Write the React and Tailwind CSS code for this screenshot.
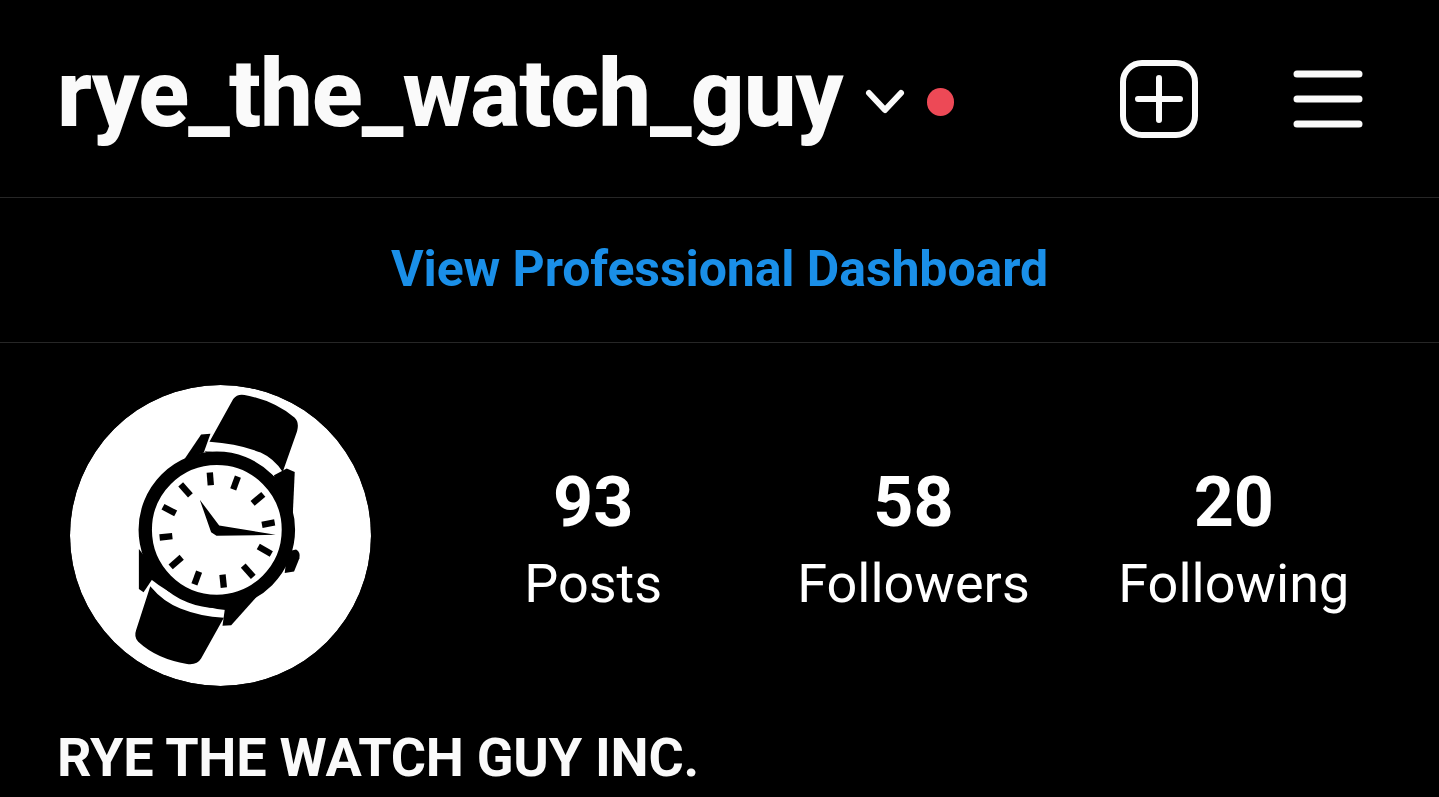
import React from "react";

const font = { fontFamily: "Roboto, sans-serif" };
const ticks = [
  [448, 292, 451, 330], [532, 304, 518, 342], [608, 357, 576, 384], [642, 441, 604, 448],
  [632, 535, 593, 513], [578, 604, 548, 570], [490, 636, 486, 597], [402, 626, 416, 588],
  [331, 574, 364, 545], [298, 486, 336, 482], [308, 394, 346, 414], [361, 327, 390, 360],
];

function Watch() {
  return (
    <svg viewBox="30 30 900 900" className="w-full h-full block">
      <circle cx="480" cy="480" r="450" fill="#fff" />
      <path fill="#000" d="M447 200 L518 72 Q530 56 552 60 Q640 76 702 128 Q716 142 709 168 L666 290 Q640 250 600 232 Q530 205 447 200 Z" />
      <path fill="#000" d="M270 632 Q310 680 360 698 Q420 722 490 726 L422 848 Q410 868 380 864 Q290 850 234 798 Q220 784 228 762 Z" />
      <path fill="#000" d="M372 252 L422 178 L450 176 L430 232 Z" />
      <path fill="#000" d="M640 300 L678 280 L702 290 L696 420 L660 420 Z" />
      <path fill="#000" d="M236 520 L236 640 L250 650 L290 590 Z" />
      <path fill="#000" d="M486 750 L512 748 L600 650 L500 650 Z" />
      <path fill="#000" d="M680 528 L706 522 Q720 530 716 548 L700 588 L672 592 Z" />
      <path fill="#000" d="M432 228 Q560 232 662 322 L660 400 L500 280 Z" />
      <path fill="#000" d="M268 608 Q370 690 495 703 L500 640 L300 560 Z" />
      <circle cx="469" cy="463" r="214" fill="#fff" stroke="#000" strokeWidth="40" />
      {ticks.map(([x1, y1, x2, y2], i) => (
        <line key={i} x1={x1} y1={y1} x2={x2} y2={y2} stroke="#000" strokeWidth="19" />
      ))}
      <path fill="#000" d="M418 373 L476 450 L645 478 L468 481 L452 470 Z" />
    </svg>
  );
}

function Stat({ value, label }) {
  return (
    <div className="flex flex-col items-center">
      <div className="text-[70px] leading-[76px] font-bold text-white">{value}</div>
      <div className="text-[54px] leading-[64px] text-white mt-[12px]">{label}</div>
    </div>
  );
}

export default function App() {
  return (
    <div className="w-[1439px] h-[797px] bg-black overflow-hidden" style={font}>
      <div className="h-[198px] border-b border-[#262626] flex items-center pl-[57px] pr-[76px]">
        <span className="text-[94px] font-extrabold text-[#fafafa] leading-none tracking-[-1px] -mt-[10px]">rye_the_watch_guy</span>
        <svg viewBox="0 0 40 26" className="w-[40px] h-[26px] ml-[22px] mt-[6px]" fill="none" stroke="#fafafa" strokeWidth="6" strokeLinecap="round" strokeLinejoin="round">
          <path d="M4 4 L20 21 L36 4" />
        </svg>
        <span className="w-[27px] h-[28px] rounded-full bg-[#ed4956] ml-[22px] mt-[6px]" />
        <svg viewBox="0 0 78 78" className="w-[78px] h-[78px] ml-auto" fill="none" stroke="#fafafa" strokeWidth="6" strokeLinecap="round">
          <rect x="3" y="3" width="72" height="72" rx="19" />
          <path d="M39 18 V60 M18 39 H60" />
        </svg>
        <svg viewBox="0 0 70 58" className="w-[70px] h-[58px] ml-[95px]" fill="none" stroke="#fafafa" strokeWidth="7" strokeLinecap="round">
          <path d="M4 4 H66 M4 29 H66 M4 54 H66" />
        </svg>
      </div>
      <div className="h-[145px] border-b border-[#262626] flex items-center justify-center">
        <span className="text-[50px] font-bold text-[#1a8fe8] tracking-[-0.1px] leading-none -mt-[3px]">View Professional Dashboard</span>
      </div>
      <div className="flex items-center pl-[70px] pt-[42px]">
        <div className="w-[301px] h-[301px] rounded-full overflow-hidden shrink-0">
          <Watch />
        </div>
        <div className="ml-[62px] grid grid-cols-3 w-[961px] mt-[9px]">
          <Stat value="93" label="Posts" />
          <Stat value="58" label="Followers" />
          <Stat value="20" label="Following" />
        </div>
      </div>
      <div className="pl-[57px] mt-[40px] text-[54px] font-bold text-[#fafafa] leading-[64px] tracking-[-0.25px]">RYE THE WATCH GUY INC.</div>
    </div>
  );
}
